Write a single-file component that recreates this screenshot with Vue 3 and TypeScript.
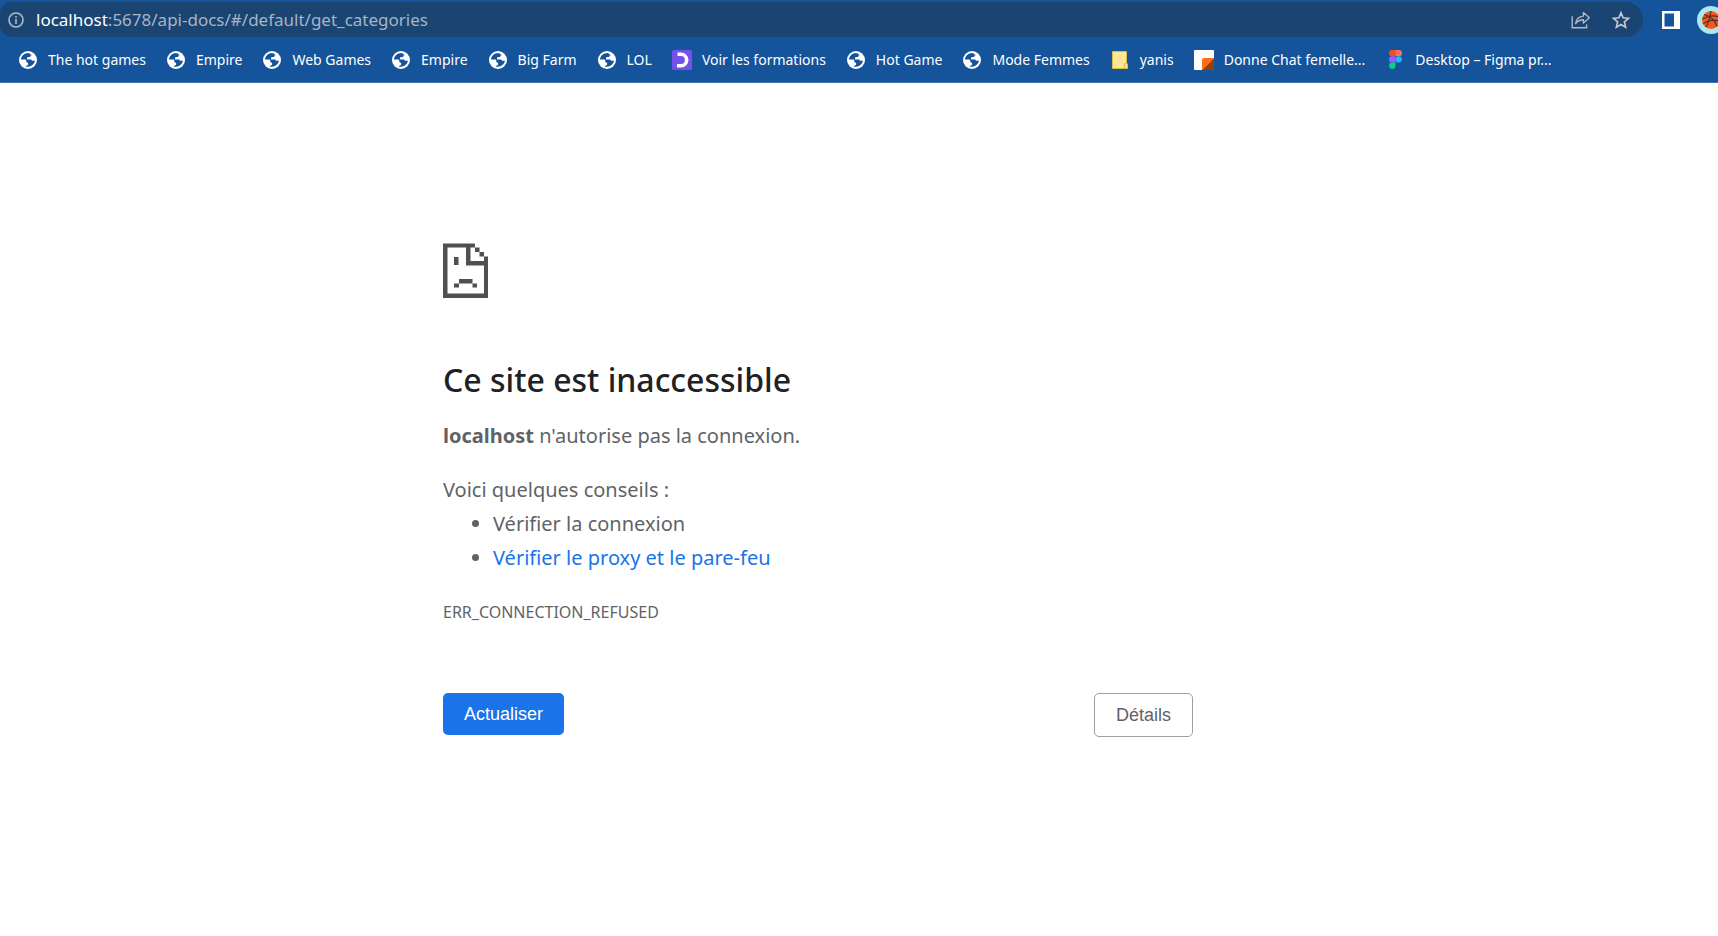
<script setup lang="ts">
type IconName = 'globe' | 'purple' | 'folder' | 'donne' | 'figma'

interface Bookmark {
  icon: IconName
  label: string
}

const bookmarks: Bookmark[] = [
  { icon: 'globe', label: 'The hot games' },
  { icon: 'globe', label: 'Empire' },
  { icon: 'globe', label: 'Web Games' },
  { icon: 'globe', label: 'Empire' },
  { icon: 'globe', label: 'Big Farm' },
  { icon: 'globe', label: 'LOL' },
  { icon: 'purple', label: 'Voir les formations' },
  { icon: 'globe', label: 'Hot Game' },
  { icon: 'globe', label: 'Mode Femmes' },
  { icon: 'folder', label: 'yanis' },
  { icon: 'donne', label: 'Donne Chat femelle...' },
  { icon: 'figma', label: 'Desktop – Figma pr...' },
]
</script>

<template>
  <div class="browser">
    <header class="chrome">
      <div class="toolbar">
        <div class="omnibox">
          <button class="icon-button" type="button" aria-label="Informations sur le site">
            <svg width="16" height="16" viewBox="0 0 16 16" fill="none" stroke="#b4bcc6" stroke-width="1.6">
              <circle cx="8" cy="8" r="7" />
              <path d="M8 7v5M8 4v1.8" />
            </svg>
          </button>
          <div class="url"><span class="host">localhost</span>:5678/api-docs/#/default/get_categories</div>
          <button class="icon-button" type="button" aria-label="Partager">
            <svg width="20" height="20" viewBox="0 0 20 20" fill="none" stroke="#b3b8bf" stroke-width="1.4">
              <path d="M1.2 6.2v11.6h14.4v-3.4" />
              <path d="M4.6 13.6C5.2 9 7.8 6.5 12.4 6.1V2.4l6 5.300-6 5.300V9.700C9 9.700 6.600 10.800 4.600 13.600z" stroke-linejoin="round" />
            </svg>
          </button>
          <button class="icon-button" type="button" aria-label="Ajouter aux favoris">
            <svg width="20" height="20" viewBox="0 0 20 20" fill="none" stroke="#c3c5c9" stroke-width="1.7">
              <path d="M10 2.800l2.100 5 5.400.5-4.100 3.600 1.200 5.300L10 14.400l-4.600 2.800 1.200-5.300-4.100-3.600 5.400-.5z" />
            </svg>
          </button>
        </div>
        <button class="icon-button" type="button" aria-label="Panneau latéral">
          <svg width="18" height="18" viewBox="0 0 18 18">
            <path fill="#fff" fill-rule="evenodd" d="M0 0h18v18H0zM2.500 2.500v13H12v-13z" />
          </svg>
        </button>
        <button class="icon-button avatar" type="button" aria-label="Profil">
          <svg width="28" height="28" viewBox="0 0 28 28" fill="none">
            <circle cx="14" cy="14" r="14" fill="#ade6ef" />
            <circle cx="14" cy="14" r="9" fill="#f4581c" />
            <g stroke="#51302a" stroke-width="1.2">
              <path d="M5.500 13c5-3 11-4 17-2M7 8.500c6 1.500 11 5 13 12M14 5c-1 6-2 12-5 16M6 18c4-3 10-5 17-3" />
            </g>
          </svg>
        </button>
      </div>

      <nav class="bookmarks" aria-label="Favoris">
        <a v-for="(item, i) in bookmarks" :key="i" class="bookmark" href="#">
          <span class="favicon">
            <svg v-if="item.icon === 'globe'" width="18" height="18" viewBox="0 0 18 18">
              <circle cx="9" cy="9" r="9" fill="#fff" />
              <path fill="#15539a" d="M9.300 2C5.500 2 2.200 4.900 2 8.500h3.800c1 0 1.500.5 1.500 1.300v.7c0 .7.500 1.200 1.300 1.200h.5v1.700c-.4 1-1.700 1.400-2.800 1.800 3.900 1.600 8.700-.7 9.700-5.400h-2.300c-.8 0-1.300-.6-1.300-1.300H8.200c-.8-1.700 0-2.400 1.200-2.600h1.900V4.500h1.500c-.7-1-2-2.200-3.500-2.500z" />
            </svg>
            <svg v-else-if="item.icon === 'purple'" width="20" height="20" viewBox="0 0 20 20">
              <rect width="20" height="20" rx="1.5" fill="#7451eb" />
              <path d="M5.500 4.300H9a5.600 5.600 0 0 1 0 11.400H5" fill="none" stroke="#fff" stroke-width="3.6" />
            </svg>
            <svg v-else-if="item.icon === 'folder'" width="16" height="18" viewBox="0 0 16 18">
              <path d="M.5.500h14v12.300h1v4.700H.5z" fill="#ffe694" stroke="#dfbd45" />
              <path d="M12.500 17.500v-4.700h2" fill="none" stroke="#dfbd45" />
            </svg>
            <svg v-else-if="item.icon === 'donne'" width="20" height="20" viewBox="0 0 20 20">
              <rect width="20" height="20" rx="1" fill="#fff" />
              <path d="M8 20V10q0-2 2-2h10z" fill="#ff6e14" />
              <path d="M20 8v12H8z" fill="#993f05" />
            </svg>
            <svg v-else width="13" height="19" viewBox="0 0 13 19">
              <path d="M3.200 0h3.300v6.300H3.200a3.150 3.150 0 0 1 0-6.300z" fill="#f24e1e" />
              <path d="M6.500 0h3.300a3.150 3.150 0 0 1 0 6.300H6.500z" fill="#ff7262" />
              <path d="M3.200 6.300h3.300v6.300H3.200a3.150 3.150 0 0 1 0-6.300z" fill="#a259ff" />
              <circle cx="9.7" cy="9.45" r="3.15" fill="#1abcfe" />
              <path d="M3.200 12.600h3.300v3.200a3.200 3.200 0 1 1-3.300-3.200z" fill="#0acf83" />
            </svg>
          </span>
          <span>{{ item.label }}</span>
        </a>
      </nav>
    </header>

    <main class="page">
      <div class="error">
        <svg class="sad" width="45" height="55" viewBox="0 0 45 55" fill="#505050" aria-hidden="true">
          <path fill-rule="evenodd" d="M0 .5h32v4h4.500v4.500H41v4.500h4V55H0zM4.500 4.500v46H41V22.500H23v-18zM27.500 4.500V18H41v-4.500h-4.500V9H32V4.500z" />
          <path d="M11 14h4.500v8H11zM16 36h13.500v4.500H34v4h-4.500v-4H16v4h-5v-4h5z" />
        </svg>
        <h1>Ce site est inaccessible</h1>
        <p><strong>localhost</strong> n'autorise pas la connexion.</p>
        <p class="advice">Voici quelques conseils :</p>
        <ul>
          <li>Vérifier la connexion</li>
          <li><a href="#">Vérifier le proxy et le pare-feu</a></li>
        </ul>
        <p class="code">ERR_CONNECTION_REFUSED</p>
        <div class="actions">
          <button class="primary" type="button">Actualiser</button>
          <button class="secondary" type="button">Détails</button>
        </div>
      </div>
    </main>
  </div>
</template>

<style>
body {
  background: #fff;
}
</style>

<style scoped>
.browser {
  font-family: "Segoe UI", "Noto Sans", sans-serif;
  overflow-x: hidden;
}

.chrome {
  background: #15539a;
  border-bottom: 1px solid #3f73b0;
}

.toolbar {
  display: flex;
  align-items: center;
  padding-top: 2px;
  margin-right: -7px;
}

.omnibox {
  flex: 1;
  display: flex;
  align-items: center;
  height: 35px;
  padding: 0 12px 0 8px;
  margin-right: 19px;
  background: #1a4472;
  border-radius: 12px 18px 18px 12px;
}

.url {
  flex: 1;
  padding-left: 12px;
  font-size: 17px;
  line-height: 24px;
  color: #a6b5c6;
  white-space: nowrap;
}

.host {
  color: #fff;
}

.icon-button {
  display: flex;
  flex: none;
  padding: 0;
  border: 0;
  background: none;
}

.icon-button + .icon-button {
  margin-left: 20px;
}

.toolbar > .avatar {
  margin-left: 17px;
}

.bookmarks {
  display: flex;
  gap: 20px;
  height: 45px;
  padding: 0 18px;
}

.bookmark {
  display: flex;
  align-items: center;
  gap: 10px;
  font-size: 14px;
  line-height: 20px;
  color: #fff;
  text-decoration: none;
  white-space: nowrap;
}

.favicon {
  display: flex;
  justify-content: center;
  width: 20px;
}

.page {
  padding: 160px 82px 40px 0;
}

.error {
  max-width: 750px;
  margin: 0 auto;
  color: #5f6368;
  font-size: 20px;
  line-height: 34px;
}

.sad {
  display: block;
}

h1 {
  margin: 60px 0 17px;
  font-size: 32px;
  font-weight: 500;
  line-height: 44px;
  color: #202124;
}

p {
  margin: 0;
}

.advice {
  margin-top: 20px;
}

ul {
  margin: 0;
  padding-left: 50px;
}

li a {
  color: #1a73e8;
  text-decoration: none;
}

.code {
  margin-top: 20px;
  font-size: 16px;
}

.actions {
  display: flex;
  justify-content: space-between;
  align-items: flex-start;
  margin-top: 64px;
}

.actions button {
  padding: 0 21px;
  border: 0;
  border-radius: 5px;
  font-family: "Liberation Sans", Arial, sans-serif;
  font-size: 18px;
  line-height: 42px;
}

.actions .primary {
  background: #1a73e8;
  color: #fff;
}

.actions .secondary {
  border: 1px solid #9aa0a6;
  background: #fff;
  color: #5f6368;
}
</style>
